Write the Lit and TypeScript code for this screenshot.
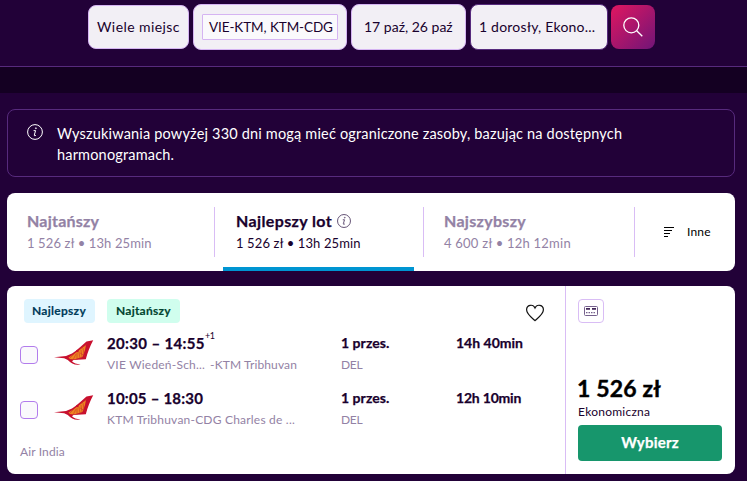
import { LitElement, html, css, svg } from "lit";
import { customElement, property } from "lit/decorators.js";

const infoIcon = html`<svg viewBox="0 0 16 16" width="100%" height="100%" fill="none" stroke="currentColor">
  <circle cx="8" cy="8" r="7.4" />
  <path d="M6.6 6.6 H8.6 L7.3 11 Q7.1 12 8.2 11.7 L9 11.2" />
  <circle cx="8.9" cy="4.2" r=".55" fill="currentColor" stroke-width=".6" />
</svg>`;

const rays = [
  [22, 14, 19, 20], [23, 13, 23, 20], [25, 12, 26, 19], [27, 10, 28, 17],
  [20, 14, 15, 19], [29, 8, 30, 14], [26, 13, 31, 16], [26, 9, 33, 4],
];

const airlineLogo = html`<svg viewBox="0 0 40 26" width="40" height="26">
  <path fill="#c8102e" d="M0 17.2 L12 16 L18 13.4 C24 9.5 28.5 5.2 32.5 1.5 L39.2 .3 C36 6.4 33.6 12.5 31.8 19.2 L19.5 20 L18 21.2 C19.8 23 22.5 24.2 26.5 24.4 C21.5 25.8 17.4 23.6 13.8 20 L10.2 18.3 Z" />
  <path fill="#ee8420" d="M14.5 17.6 L20 14 L32 5 L31 10 L28.5 17 L20 19.4 L15.5 19 Z" />
  ${rays.map(([a, b, c, d]) => svg`<path d="M${a} ${b} L${c} ${d}" stroke="#c8322a" stroke-width=".55" />`)}
  <circle cx="23.4" cy="11" r="1.3" fill="#c8102e" />
</svg>`;

@customElement("flight-leg")
class FlightLeg extends LitElement {
  @property() times = "";
  @property() plus = "";
  @property() from = "";
  @property() to = "";
  @property() duration = "";

  static styles = css`
    :host { display: grid; grid-template-columns: 34px 53px 234px 115px 1fr; height: 55px; color: #19012d; }
    .check { box-sizing: border-box; width: 18px; height: 18px; border: 1px solid #b27cec; border-radius: 4px; background: #faf9fc; margin-top: 13px; }
    .logo { margin-top: 7px; }
    .logo svg { display: block; }
    .main { font-weight: 700; font-size: 15px; line-height: 20px; white-space: nowrap; -webkit-text-stroke: .25px; }
    .times { letter-spacing: .35px; }
    .times.short { letter-spacing: .22px; }
    sup { font-size: 9px; font-weight: 400; line-height: 0; vertical-align: 10px; letter-spacing: -.4px; -webkit-text-stroke: 0; }
    .sub { display: flex; font-size: 12px; line-height: 20px; margin-top: 2px; color: #9382a5; white-space: pre; letter-spacing: .21px; }
    .sub .to { letter-spacing: .12px; margin-left: 5px; }
    .stops { font-size: 14px; letter-spacing: .05px; }
    .code { letter-spacing: -.3px; }
    .duration { font-size: 14px; }
    .duration.narrow { letter-spacing: -.2px; }
  `;

  render() {
    return html`
      <div class="check"></div>
      <div class="logo">${airlineLogo}</div>
      <div>
        <div class="main times ${this.plus ? "" : "short"}">${this.times}${this.plus ? html`<sup>${this.plus}</sup>` : ""}</div>
        <div class="sub"><span>${this.from}</span>${this.to ? html`<span class="to">${this.to}</span>` : ""}</div>
      </div>
      <div>
        <div class="main stops">1 przes.</div>
        <div class="sub code">DEL</div>
      </div>
      <div class="main duration ${this.plus ? "" : "narrow"}">${this.duration}</div>
    `;
  }
}

@customElement("app-root")
class AppRoot extends LitElement {
  static styles = css`
    :host { display: block; height: 481px; overflow: hidden; background: #220138; font-family: Lato, "Noto Sans", sans-serif; color: #19012d; }
    * { box-sizing: border-box; }
    svg { display: block; }
    header { display: flex; align-items: center; height: 67px; padding: 0 0 13px 88px; border-bottom: 1px solid #572a7d; }
    .field { display: flex; align-items: center; height: 46px; border: 1px solid #d5b4f2; border-radius: 8px; background: #f2eff5; font-size: 14px; line-height: 20px; white-space: nowrap; margin-right: 4px; }
    .trip { width: 101px; height: 44px; padding-left: 8px; letter-spacing: .42px; }
    .route { width: 154px; padding-left: 8px; }
    .route span { width: 136px; height: 26px; border: 1px solid #d5b4f2; border-radius: 1px; background: #faf9fc; padding-left: 6px; font-size: 13.5px; line-height: 24px; letter-spacing: -.09px; }
    .dates { width: 115px; padding-left: 12px; }
    .guests { width: 138px; margin-right: 3px; padding-left: 8px; border-color: #572a7d; letter-spacing: .2px; }
    .search { display: grid; place-items: center; width: 44px; height: 44px; border-radius: 8px; background: linear-gradient(135deg, #e11660, #701577); color: #fff; }
    .band { height: 26px; background: #140022; }
    .notice { display: flex; height: 68px; margin: 16px 12px 0 7px; padding: 13px 0 0 19px; border: 1px solid #572a7d; border-radius: 8px; color: #fff; font-size: 14.5px; line-height: 21px; letter-spacing: .18px; white-space: nowrap; }
    .notice i { width: 16px; height: 16px; margin: 1px 14px 0 0; }
    .tabs { display: flex; height: 78px; margin: 16px 12px 0 7px; border-radius: 8px; background: #fff; padding-top: 14px; }
    .tab { display: flex; width: 209px; height: 64px; color: #9382a5; }
    .tab:first-child { width: 208px; }
    .tab::after { content: ""; width: 1px; height: 50px; background: #d9bdf5; }
    .tab.last { width: 211px; }
    .tab > div { flex: 1; padding: 4px 0 0 20px; white-space: nowrap; }
    .tab.active > div { position: relative; color: #19012d; padding-left: 21px; }
    .tab.active > div::after { content: ""; position: absolute; left: 8px; width: 191px; bottom: 0; height: 4px; background: #0095d2; }
    .name { display: flex; font-weight: 700; font-size: 16px; line-height: 20px; letter-spacing: .3px; -webkit-text-stroke: .25px; }
    .active .name { letter-spacing: .37px; }
    .first .name { letter-spacing: .22px; }
    .name i { width: 14px; height: 14px; margin: 3px 0 0 5px; color: #4f3b62; }
    .info { font-size: 13px; line-height: 20px; margin-top: 2px; letter-spacing: .12px; }
    .last .info { letter-spacing: .23px; }
    .more { display: flex; align-items: center; height: 48px; padding-left: 29px; color: #000; font-size: 12px; letter-spacing: .17px; }
    .more svg { margin: 2px 13px 0 0; }
    .card { display: flex; height: 188px; margin: 15px 12px 0 7px; border-radius: 8px; background: #fff; }
    .left { display: flex; flex-direction: column; width: 559px; padding: 13px 20px 0 13px; border-right: 1px solid #d9bdf5; }
    .top { display: flex; height: 34px; padding-left: 4px; }
    .badge { height: 24px; border-radius: 4px; padding: 0 0 0 9px; font-weight: 700; font-size: 12px; line-height: 24px; -webkit-text-stroke: .15px; }
    .best { width: 71px; margin-right: 12px; background: #dff5ff; color: #003b59; letter-spacing: .27px; padding-left: 8px; }
    .cheap { width: 73px; background: #d0feee; color: #024530; letter-spacing: .23px; }
    .heart { margin: 5px 0 0 auto; }
    .airline { font-size: 12px; line-height: 18px; color: #9382a5; letter-spacing: .13px; }
    .right { display: flex; flex-direction: column; flex: 1; padding: 13px 13px 13px 12px; white-space: nowrap; }
    .bag { display: grid; place-items: center; width: 26px; height: 24px; border: 1px solid #d9bdf5; border-radius: 4px; }
    .price { margin: auto 0 0 -1px; font-size: 23px; line-height: 28px; font-weight: 700; color: #000; letter-spacing: .16px; -webkit-text-stroke: .4px; }
    .cabin { font-size: 12px; line-height: 18px; padding-top: 1px; letter-spacing: .25px; }
    .choose { height: 36px; margin-top: 4px; border-radius: 4px; background: #17966c; color: #fff; text-align: center; font-size: 15px; line-height: 35px; font-weight: 700; letter-spacing: .2px; -webkit-text-stroke: .25px; }
  `;

  render() {
    return html`
      <header>
        <div class="field trip">Wiele miejsc</div>
        <div class="field route"><span>VIE-KTM, KTM-CDG</span></div>
        <div class="field dates">17 paź, 26 paź</div>
        <div class="field guests">1 dorosły, Ekono...</div>
        <div class="search">
          <svg width="22" height="22" viewBox="0 0 22 22" fill="none" stroke="#fff" stroke-width="1.3">
            <circle cx="9.3" cy="9.3" r="7.5" /><path d="M14.7 14.7 L20.3 20.3" />
          </svg>
        </div>
      </header>
      <div class="band"></div>
      <div class="notice"><i>${infoIcon}</i>
        <div>Wyszukiwania powyżej 330 dni mogą mieć ograniczone zasoby, bazując na dostępnych<br />harmonogramach.</div>
      </div>
      <div class="tabs">
        <div class="tab first"><div><div class="name">Najtańszy</div><div class="info">1 526 zł • 13h 25min</div></div></div>
        <div class="tab active"><div><div class="name">Najlepszy lot<i>${infoIcon}</i></div><div class="info">1 526 zł • 13h 25min</div></div></div>
        <div class="tab last"><div><div class="name">Najszybszy</div><div class="info">4 600 zł • 12h 12min</div></div></div>
        <div class="more">
          <svg width="10" height="10" viewBox="0 0 10 10" stroke="#000" shape-rendering="crispEdges">
            <path d="M0 .5H10 M0 3.5H8 M0 6.5H6 M0 9.5H4" />
          </svg>Inne
        </div>
      </div>
      <div class="card">
        <div class="left">
          <div class="top">
            <div class="badge best">Najlepszy</div>
            <div class="badge cheap">Najtańszy</div>
            <svg class="heart" width="20" height="18" viewBox="0 0 20 18" fill="none" stroke="#111" stroke-width="1.2">
              <path d="M10 16.6 C7 13.8 1.6 10.2 1.6 5.8 C1.6 .8 8 -.4 10 4 C12 -.4 18.4 .8 18.4 5.8 C18.4 10.2 13 13.8 10 16.6 Z" />
            </svg>
          </div>
          <flight-leg times="20:30 – 14:55" plus="+1" from="VIE Wiedeń-Sch..." to="-KTM Tribhuvan" duration="14h 40min"></flight-leg>
          <flight-leg times="10:05 – 18:30" from="KTM Tribhuvan-CDG Charles de ..." duration="12h 10min"></flight-leg>
          <div class="airline">Air India</div>
        </div>
        <div class="right">
          <div class="bag">
            <svg width="14" height="10" viewBox="0 0 14 10" fill="none" stroke="#75608c">
              <rect x=".5" y=".5" width="13" height="9" rx="1" />
              <path d="M2 2.9H6 M8 2.9H12" stroke="#432759" stroke-width="1.6" />
              <path d="M2 6.6H12" stroke-width="1.3" stroke-dasharray="1.5 1" />
            </svg>
          </div>
          <div class="price">1 526 zł</div>
          <div class="cabin">Ekonomiczna</div>
          <div class="choose">Wybierz</div>
        </div>
      </div>
    `;
  }
}
